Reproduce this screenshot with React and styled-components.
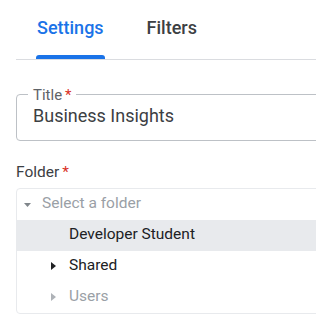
import React from 'react';
import styled, { createGlobalStyle } from 'styled-components';

const Global = createGlobalStyle`
  body {
    margin: 0;
    background: #fff;
    overflow: hidden;
    font-family: Roboto, 'Liberation Sans', sans-serif;
  }
`

const Page = styled.div`
  width: 440px;
  padding-left: 16px;
`
const TabBar = styled.div`
  display: flex;
  gap: 43px;
  padding-left: 21px;
  height: 59px;
  border-bottom: 1px solid #dadce0;
`
const Tab = styled.div`
  position: relative;
  padding-top: 16px;
  font-size: 18px;
  line-height: 24px;
  font-weight: 500;
  color: ${p => (p.active ? '#1a73e8' : '#3c4043')};

  &::after {
    content: '';
    display: ${p => (p.active ? 'block' : 'none')};
    position: absolute;
    left: -1px;
    right: -1px;
    bottom: 0;
    height: 4px;
    border-radius: 3px 3px 0 0;
    background: #1a73e8;
  }
`
const Field = styled.fieldset`
  margin: 27px 0 0;
  padding: 0 16px 9px;
  border: 1px solid #bdc1c6;
  border-radius: 4px;
`
const Legend = styled.legend`
  margin-left: -5px;
  padding: 2px 4px 0 5px;
  font-size: 15px;
  line-height: 12px;
  color: #5f6368;
`
const Star = styled.span`
  margin-left: 3px;
  color: #d93025;
`
const TitleInput = styled.input`
  display: block;
  width: 100%;
  height: 30px;
  margin: 0;
  padding: 0;
  border: none;
  outline: none;
  font-family: inherit;
  font-size: 18px;
  line-height: 30px;
  color: #3c4043;
  background: transparent;
`
const Label = styled.div`
  margin-top: 21px;
  font-size: 15.5px;
  line-height: 20px;
  color: #3c4043;
`
const Tree = styled.div`
  margin-top: 6px;
  border: 1px solid #e8eaed;
  border-radius: 4px;
  overflow: hidden;
`
const Row = styled.div`
  display: flex;
  align-items: center;
  height: 31px;
  padding-left: ${p => 7 + p.depth * 27}px;
  background: ${p => (p.selected ? '#e8eaed' : 'transparent')};
`
const Slot = styled.span`
  display: flex;
  align-items: center;
  width: 18px;
  flex-shrink: 0;
`
const RowText = styled.span`
  font-size: 15.5px;
  line-height: 29px;
  padding-bottom: 2px;
  color: ${p => p.muted ? '#9aa0a6' : '#202124'};
`

const CaretDown = ({ color }) => (
  <svg width="7" height="4" viewBox="0 0 7 4">
    <polygon points="0,0 7,0 3.5,4" fill={color} />
  </svg>
)
const CaretRight = ({ color }) => (
  <svg width="5" height="8" viewBox="0 0 5 8" style={{ marginTop: -2 }}>
    <polygon points="0,0 5,4 0,8" fill={color} />
  </svg>
)

const folders = [
  { name: 'Select a folder', depth: 0, caret: 'down', muted: true },
  { name: 'Developer Student', depth: 1, selected: true },
  { name: 'Shared', depth: 1, caret: 'right' },
  { name: 'Users', depth: 1, caret: 'right', muted: true },
]

const App = () => {
  return (
    <Page>
      <Global />
      <TabBar>
        <Tab active>Settings</Tab>
        <Tab>Filters</Tab>
      </TabBar>
      <Field>
        <Legend>Title<Star>*</Star></Legend>
        <TitleInput defaultValue="Business Insights" readOnly />
      </Field>
      <Label>Folder<Star>*</Star></Label>
      <Tree>
        {folders.map(f => (
          <Row key={f.name} depth={f.depth} selected={f.selected}>
            <Slot>
              {f.caret === 'down' && <CaretDown color="#80868b" />}
              {f.caret === 'right' && <CaretRight color={f.muted ? '#aeb2b7' : '#202124'} />}
            </Slot>
            <RowText muted={f.muted}>{f.name}</RowText>
          </Row>
        ))}
      </Tree>
    </Page>
  )
}
export default App;
